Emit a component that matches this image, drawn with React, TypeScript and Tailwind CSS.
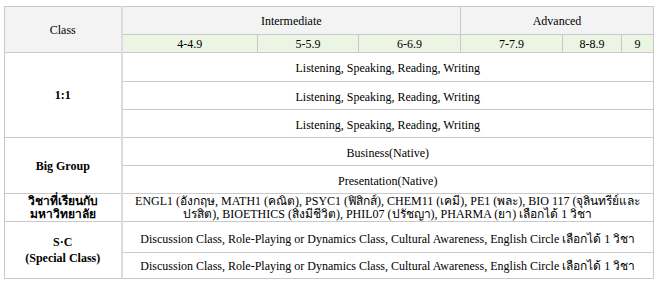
import React from 'react';

const cell = 'border border-[#c9c9c9] text-center align-middle p-0';
const skills = 'Listening, Speaking, Reading, Writing';
const sc = 'Discussion Class, Role-Playing or Dynamics Class, Cultural Awareness, English Circle เลือกได้ 1 วิชา';

const App: React.FC = () => {
  return (
    <div className="w-[657px] h-[286px] bg-white pt-[6px] pl-[4px] font-['Liberation_Serif','Noto_Sans',serif] text-[12px] text-black">
      <table className="table-fixed border-collapse w-[649px]">
        <colgroup>
          <col className="w-[117px]" />
          <col className="w-[136px]" />
          <col className="w-[101px]" />
          <col className="w-[102px]" />
          <col className="w-[102px]" />
          <col className="w-[59px]" />
          <col className="w-[32px]" />
        </colgroup>
        <thead>
          <tr className="h-[28px] bg-[#f3f3f3]">
            <td rowSpan={2} className={`${cell} border-r-2 border-r-[#dcdcdc]`}>Class</td>
            <td colSpan={3} className={cell}>Intermediate</td>
            <td colSpan={3} className={cell}>Advanced</td>
          </tr>
          <tr className="h-[18px] bg-[#ecf4e3] leading-[16px]">
            <td className={cell}>4-4.9</td>
            <td className={cell}>5-5.9</td>
            <td className={cell}>6-6.9</td>
            <td className={cell}>7-7.9</td>
            <td className={cell}>8-8.9</td>
            <td className={cell}>9</td>
          </tr>
        </thead>
        <tbody>
          <tr className="h-[29px]">
            <td rowSpan={3} className={`${cell} font-bold border-r-2 border-r-[#dcdcdc]`}>1:1</td>
            <td colSpan={6} className={`${cell} pt-[2px]`}>{skills}</td>
          </tr>
          <tr className="h-[28px]">
            <td colSpan={6} className={`${cell} pt-[2px]`}>{skills}</td>
          </tr>
          <tr className="h-[28px]">
            <td colSpan={6} className={`${cell} pt-[2px]`}>{skills}</td>
          </tr>
          <tr className="h-[28px]">
            <td rowSpan={2} className={`${cell} font-bold border-r-2 border-r-[#dcdcdc]`}>Big Group</td>
            <td colSpan={6} className={`${cell} pt-[2px]`}>Business(Native)</td>
          </tr>
          <tr className="h-[28px]">
            <td colSpan={6} className={`${cell} pt-[2px]`}>Presentation(Native)</td>
          </tr>
          <tr className="h-[28px] leading-[13px]">
            <td className={`${cell} font-bold border-r-2 border-r-[#dcdcdc] pt-[1px]`}>
              วิชาที่เรียนกับ
              <br />
              มหาวิทยาลัย
            </td>
            <td colSpan={6} className={`${cell} px-2 pt-[1px]`}>
              ENGL1 (อังกฤษ, MATH1 (คณิต), PSYC1 (ฟิสิกส์), CHEM11 (เคมี), PE1 (พละ), BIO 117 (จุลินทรีย์และปรสิต), BIOETHICS (สิ่งมีชีวิต), PHIL07 (ปรัชญา), PHARMA (ยา) เลือกได้ 1 วิชา
            </td>
          </tr>
          <tr className="h-[31px]">
            <td rowSpan={2} className={`${cell} font-bold leading-[16px] border-r-2 border-r-[#dcdcdc]`}>
              S·C
              <br />
              (Special Class)
            </td>
            <td colSpan={6} className={`${cell} pt-[3px]`}>{sc}</td>
          </tr>
          <tr className="h-[26px]">
            <td colSpan={6} className={`${cell} pt-[1px]`}>{sc}</td>
          </tr>
        </tbody>
      </table>
    </div>
  );
};

export default App;
